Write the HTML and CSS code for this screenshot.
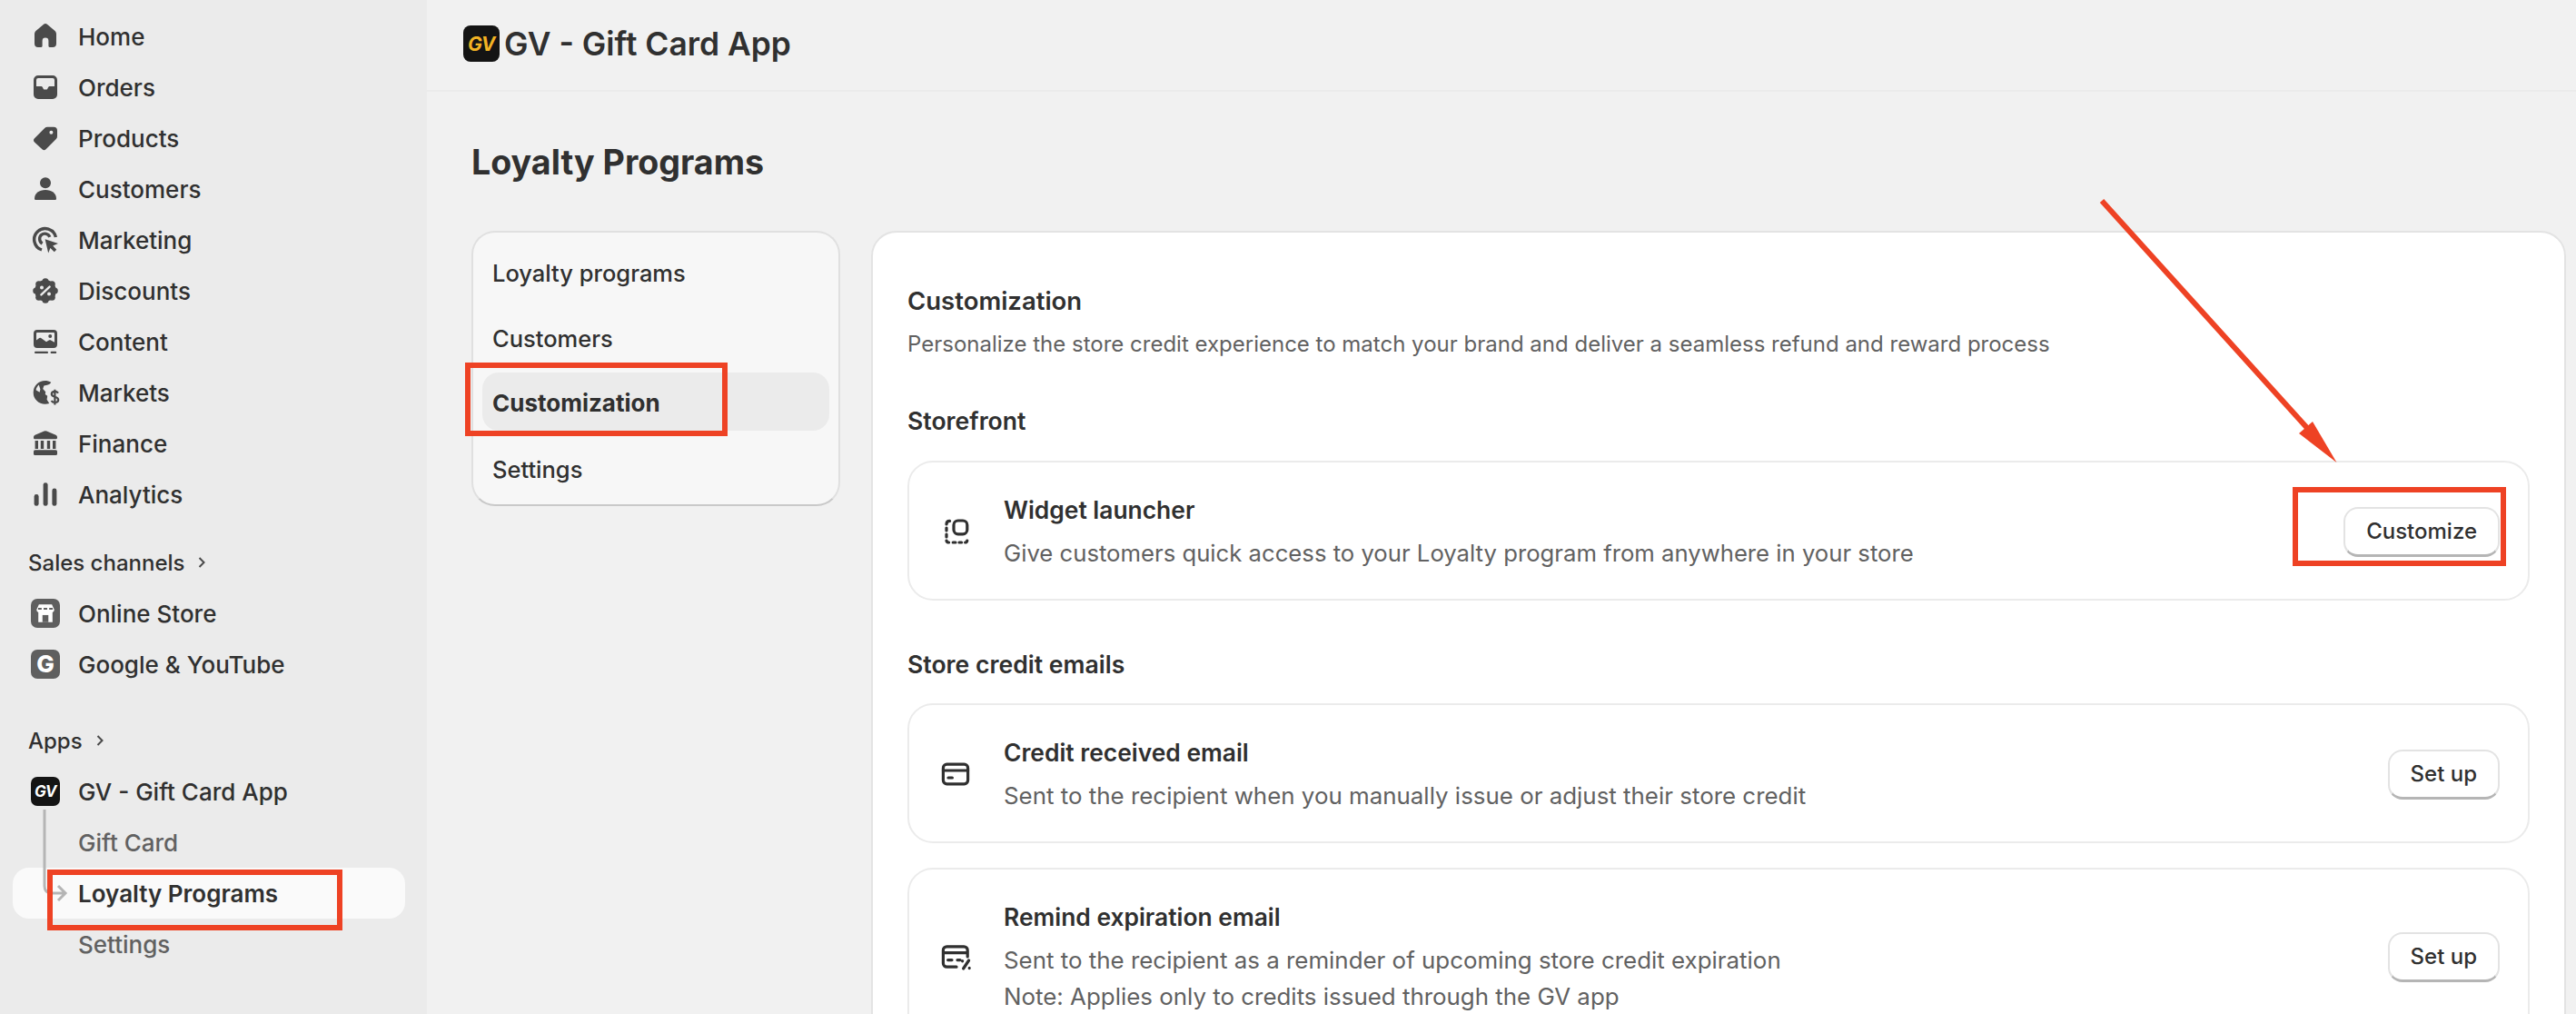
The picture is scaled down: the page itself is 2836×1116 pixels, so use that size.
FILE: index.html
```html
<!DOCTYPE html>
<html lang="en">
<head>
    <meta charset="UTF-8">
    <meta name="viewport" content="width=device-width, initial-scale=1.0">
    <title>GV - Gift Card App - Loyalty Programs</title>
    <link rel="stylesheet" href="styles.css">
</head>
<body>

<div class="app">

    <div class="sidebar">
        <ul class="side-list">
            <li class="side-item">
                <svg class="side-icon" viewBox="0 0 20 20"><path d="M8.900 3.500a1.700 1.700 0 0 1 2.200 0l4 3.400c.6.500.9 1.100.9 1.900V14a2 2 0 0 1-2 2h-1.500a.8.8 0 0 1-.8-.8v-2.700a1.700 1.700 0 0 0-3.400 0v2.700a.8.8 0 0 1-.8.8H6a2 2 0 0 1-2-2V8.800c0-.8.3-1.400.9-1.900z"/></svg>
                Home
            </li>
            <li class="side-item">
                <svg class="side-icon" viewBox="0 0 20 20"><path fill-rule="evenodd" d="M6 3.500h8A2.500 2.500 0 0 1 16.500 6v8a2.500 2.500 0 0 1-2.500 2.500H6A2.500 2.500 0 0 1 3.500 14V6A2.500 2.500 0 0 1 6 3.500zM6 5a1 1 0 0 0-1 1v3.500h2.500c.5 0 .8.2 1 .6l.3.6c.2.4.5.6 1 .6h.4c.5 0 .8-.2 1-.6l.3-.6c.2-.4.5-.6 1-.6H15V6a1 1 0 0 0-1-1z"/></svg>
                Orders
            </li>
            <li class="side-item">
                <svg class="side-icon" viewBox="0 0 20 20"><path fill-rule="evenodd" d="M16.500 5.500V9c0 .6-.2 1.100-.6 1.500l-5.600 5.600a1.500 1.500 0 0 1-2.100 0L4 12.200a1.500 1.500 0 0 1 0-2.100l5.600-5.600c.4-.4.9-.6 1.500-.6h3.400a2 2 0 0 1 2 2zM13.200 7.900a1 1 0 1 0 0-2 1 1 0 0 0 0 2z"/></svg>
                Products
            </li>
            <li class="side-item">
                <svg class="side-icon" viewBox="0 0 20 20"><circle cx="10" cy="6.600" r="3"/><path d="M4 15.200c0-2.800 2.600-4.700 6-4.700s6 1.900 6 4.700c0 .5-.3.8-.8.8H4.800c-.5 0-.8-.3-.8-.8z"/></svg>
                Customers
            </li>
            <li class="side-item">
                <svg class="side-icon" viewBox="0 0 20 20"><path class="line" d="M8 15.500A6 6 0 1 1 15.700 8.500"/><path class="line" d="M8.300 12A2.900 2.900 0 1 1 12.400 8.400"/><path d="M9.800 9.600l7.200 2.400-2.900 1.200 2 2.200-1.200 1.200-2.200-2.100-1.100 2.800z"/></svg>
                Marketing
            </li>
            <li class="side-item">
                <svg class="side-icon" viewBox="0 0 20 20">
                    <circle cx="10" cy="10" r="5.900"/>
                    <circle cx="10" cy="4.900" r="1.800"/><circle cx="10" cy="15.100" r="1.800"/>
                    <circle cx="4.900" cy="10" r="1.800"/><circle cx="15.100" cy="10" r="1.800"/>
                    <circle cx="6.400" cy="6.400" r="1.800"/><circle cx="13.600" cy="6.400" r="1.800"/>
                    <circle cx="6.400" cy="13.600" r="1.800"/><circle cx="13.600" cy="13.600" r="1.800"/>
                    <path class="cut" d="M12.300 7.800l-4.600 4.400"/><circle class="hole" cx="8" cy="8.200" r="1"/><circle class="hole" cx="12" cy="11.800" r="1"/>
                </svg>
                Discounts
            </li>
            <li class="side-item">
                <svg class="side-icon" viewBox="0 0 20 20"><path fill-rule="evenodd" d="M5.500 3.500h9a2 2 0 0 1 2 2v6a2 2 0 0 1-2 2h-9a2 2 0 0 1-2-2v-6a2 2 0 0 1 2-2zM5.500 5a.5.5 0 0 0-.5.5v3.700l1.300-1c.5-.4 1.100-.4 1.600 0l2.600 1.900 1.200-.7c.5-.3 1-.3 1.500 0l1.800 1V5.500a.5.5 0 0 0-.5-.5z"/><circle cx="12.600" cy="7" r="1"/><rect x="4" y="15.400" width="7.500" height="1.100" rx=".5"/><rect x="12.800" y="15.400" width="3.300" height="1.100" rx=".5"/></svg>
                Content
            </li>
            <li class="side-item">
                <svg class="side-icon" viewBox="0 0 20 20"><path fill-rule="evenodd" d="M9.800 3.500c1.200 0 2.300.3 3.300.9-.5.900-1.100 1.300-2.100 1.500L9.200 6.200 8.600 8l1.500 1.600-.2 1.400 1.200.9-.3 2 1.300 2.100c-.7.300-1.500.4-2.300.4a6.400 6.400 0 0 1 0-12.900zM6.400 5.800C5.500 6.600 5 7.600 4.800 8.600l2 1.300.4-1.600z"/><path class="line thin" d="M17 10.300c-.4-.6-1-.9-1.800-.9-1 0-1.800.6-1.800 1.500 0 2 3.700 1 3.700 3.100 0 .9-.8 1.500-1.900 1.500-.8 0-1.500-.3-1.900-1M15.200 8.400v8.300"/></svg>
                Markets
            </li>
            <li class="side-item">
                <svg class="side-icon" viewBox="0 0 20 20"><path d="M9.300 3.300a1.800 1.800 0 0 1 1.400 0l5 2.100c.5.200.8.700.8 1.200v.4c0 .3-.3.600-.6.600H4.100a.6.600 0 0 1-.6-.6v-.4c0-.5.300-1 .8-1.200z"/><rect x="4.300" y="8.500" width="1.700" height="4.500"/><rect x="7.400" y="8.500" width="1.700" height="4.500"/><rect x="10.900" y="8.500" width="1.700" height="4.500"/><rect x="14" y="8.500" width="1.700" height="4.500"/><rect x="3.500" y="13.600" width="13" height="2.900" rx=".8"/></svg>
                Finance
            </li>
            <li class="side-item">
                <svg class="side-icon" viewBox="0 0 20 20"><rect x="3.800" y="10" width="2.500" height="6.400" rx="1.200"/><rect x="8.800" y="3.600" width="2.500" height="12.800" rx="1.200"/><rect x="13.700" y="6.800" width="2.500" height="9.600" rx="1.200"/></svg>
                Analytics
            </li>
        </ul>

        <div class="side-heading">
            Sales channels
            <svg class="chevron" viewBox="0 0 10 14"><path d="M2.500 2l5 5-5 5"/></svg>
        </div>
        <ul class="side-list">
            <li class="side-item">
                <span class="channel-box">
                    <svg class="store-glyph" viewBox="0 0 20 20"><path d="M4.500 2.500h11l2 4.500a2.300 2.300 0 0 1-1.500 2.300V17.500H4V9.300A2.300 2.300 0 0 1 2.500 7z"/><path class="cut-grey" d="M3.800 6.200h3M8.500 6.200h3M13.200 6.200h3"/><rect class="door" x="7.500" y="11.500" width="5" height="6"/></svg>
                </span>
                Online Store
            </li>
            <li class="side-item">
                <span class="channel-box channel-google">G</span>
                Google &amp; YouTube
            </li>
        </ul>

        <div class="side-heading side-heading-apps">
            Apps
            <svg class="chevron" viewBox="0 0 10 14"><path d="M2.500 2l5 5-5 5"/></svg>
        </div>
        <ul class="side-list">
            <li class="side-item">
                <span class="channel-box channel-gv">GV</span>
                GV - Gift Card App
            </li>
            <li class="side-item side-sub">Gift Card</li>
            <li class="side-item side-sub side-active">
                <svg class="tree-line" viewBox="0 0 40 104"><path d="M5 2v84q0 8 8 8h15M20 86l8 8-8 8"/></svg>
                Loyalty Programs
            </li>
            <li class="side-item side-sub">Settings</li>
        </ul>
    </div>

    <div class="main">
        <div class="topbar">
            <span class="app-logo">GV</span>
            <span class="app-name">GV - Gift Card App</span>
            <span class="more-dots"></span>
        </div>

        <div class="page">
            <h1 class="page-title">Loyalty Programs</h1>

            <div class="columns">
                <ul class="tabs">
                    <li class="tab">Loyalty programs</li>
                    <li class="tab">Customers</li>
                    <li class="tab tab-active">Customization</li>
                    <li class="tab">Settings</li>
                </ul>

                <div class="panel">
                    <h2 class="panel-title">Customization</h2>
                    <p class="panel-sub">Personalize the store credit experience to match your brand and deliver a seamless refund and reward process</p>

                    <h3 class="group-title">Storefront</h3>
                    <div class="row">
                        <svg class="row-icon" viewBox="0 0 20 20"><path d="M6.800 4.200c-1.100 0-1.800.7-1.800 1.800M5 8v1.500M5 11.500V13M5 15c.1.700.6 1 1.300 1M8.600 16h1.400M12 16h1.300M15.300 16c.7 0 1-.4 1.100-1"/><rect x="9" y="4" width="7.400" height="7.400" rx="2.400"/></svg>
                        <div class="row-text">
                            <div class="row-title">Widget launcher</div>
                            <div class="row-desc row-desc-tight">Give customers quick access to your Loyalty program from anywhere in your store</div>
                        </div>
                        <button class="btn">Customize</button>
                    </div>

                    <h3 class="group-title group-title-next">Store credit emails</h3>
                    <div class="row">
                        <svg class="row-icon" viewBox="0 0 20 20"><rect x="3.200" y="4.600" width="13.600" height="10.800" rx="2"/><path d="M3.200 8h13.600M6 12h2.200"/></svg>
                        <div class="row-text">
                            <div class="row-title">Credit received email</div>
                            <div class="row-desc">Sent to the recipient when you manually issue or adjust their store credit</div>
                        </div>
                        <button class="btn">Set up</button>
                    </div>
                    <div class="row row-next">
                        <svg class="row-icon" viewBox="0 0 20 20"><path d="M16.600 10V6.400a2 2 0 0 0-2-2H5.200a2 2 0 0 0-2 2v7.200a2 2 0 0 0 2 2h5.300M3.200 7.800h13.400M5.800 11.800H8M11 11.800h1.500M17.300 12l-3 4.500M13.800 12.300v.1M17.600 16.200v.1"/></svg>
                        <div class="row-text">
                            <div class="row-title">Remind expiration email</div>
                            <div class="row-desc">Sent to the recipient as a reminder of upcoming store credit expiration</div>
                            <div class="row-desc">Note: Applies only to credits issued through the GV app</div>
                        </div>
                        <button class="btn">Set up</button>
                    </div>
                </div>
            </div>
        </div>
    </div>

</div>

<!-- red callouts drawn on top of the screenshot -->
<svg class="marks" viewBox="0 0 2836 1116">
    <rect x="55" y="960" width="319" height="61"/>
    <rect x="515" y="402" width="283" height="75"/>
    <rect x="2527" y="539" width="229" height="81"/>
    <path d="M2314 221L2540 471"/>
    <path class="mark-head" d="M2546 464L2531 477L2572.500 509z"/>
</svg>

</body>
</html>
```

FILE: styles.css
```css
* {
    box-sizing: border-box;
    margin: 0;
    padding: 0;
}

body {
    font-family: 'Inter', 'Liberation Sans', sans-serif;
    background-color: #f1f1f1;
    color: #303030;
    overflow: hidden;
}

ul {
    list-style-type: none;
}

.app {
    display: flex;
    height: 100vh;
    overflow: hidden;
}

/* sidebar */

.sidebar {
    flex: 0 0 470px;
    background-color: #ebebeb;
    padding: 12px 24px 0 14px;
}

.side-item {
    display: flex;
    align-items: center;
    gap: 16px;
    height: 56px;
    padding-left: 16px;
    border-radius: 18px;
    font-size: 26px;
    font-weight: 500;
    position: relative;
}

.side-icon {
    width: 40px;
    height: 40px;
    fill: #4a4a4a;
}

.side-icon .line {
    fill: none;
    stroke: #4a4a4a;
    stroke-width: 1.7;
}

.side-icon .thin {
    stroke-width: 1.1;
}

.side-icon .cut {
    fill: none;
    stroke: #ebebeb;
    stroke-width: 1.2;
    stroke-linecap: round;
}

.side-icon .hole {
    fill: #ebebeb;
}

.side-heading {
    display: flex;
    align-items: center;
    gap: 14px;
    height: 56px;
    margin-top: 19px;
    padding-left: 17px;
    font-size: 24px;
    font-weight: 500;
}

.side-heading-apps {
    margin-top: 28px;
}

.chevron {
    width: 10px;
    height: 14px;
    fill: none;
    stroke: #4a4a4a;
    stroke-width: 2;
}

.channel-box {
    display: flex;
    align-items: center;
    justify-content: center;
    flex: 0 0 32px;
    width: 32px;
    height: 32px;
    margin: 0 4px;
    border-radius: 7px;
    background-color: #5f5f5f;
    color: #fff;
}

.store-glyph {
    width: 26px;
    height: 26px;
    fill: #fff;
}

.store-glyph .cut-grey {
    fill: none;
    stroke: #5f5f5f;
    stroke-width: 1.6;
}

.store-glyph .door {
    fill: #5f5f5f;
}

.channel-google {
    font-size: 26px;
    font-weight: 800;
    line-height: 32px;
}

.channel-gv {
    background-color: #141414;
    font-size: 17px;
    font-style: italic;
    font-weight: 700;
    letter-spacing: -.5px;
}

.side-sub {
    padding-left: 72px;
    color: #616161;
}

.side-active {
    background-color: #fafafa;
    color: #303030;
    font-weight: 600;
}

.tree-line {
    position: absolute;
    left: 30px;
    top: -66px;
    width: 40px;
    height: 104px;
    fill: none;
    stroke: #b5b5b5;
    stroke-width: 3;
    overflow: visible;
}

/* top bar */

.main {
    flex: 1;
    min-width: 0;
}

.topbar {
    display: flex;
    align-items: center;
    gap: 5px;
    height: 101px;
    padding-left: 40px;
    padding-bottom: 3px;
    border-bottom: 2px solid #ebebeb;
    position: relative;
}

.app-logo {
    display: flex;
    align-items: center;
    justify-content: center;
    width: 40px;
    height: 40px;
    border-radius: 8px;
    background-color: #141414;
    color: #f3b324;
    font-size: 21px;
    font-style: italic;
    font-weight: 700;
    letter-spacing: -.5px;
}

.app-name {
    font-size: 35.400px;
    font-weight: 600;
}

.more-dots {
    position: absolute;
    right: -12px;
    top: 45px;
    width: 6px;
    height: 6px;
    border-radius: 50%;
    background-color: #4a4a4a;
    box-shadow: 9px 0 0 #4a4a4a;
}

/* page */

.page {
    padding: 54px 11px 0 49px;
}

.page-title {
    height: 48px;
    margin-bottom: 51px;
    font-size: 37.600px;
    line-height: 48px;
    font-weight: 700;
}

.columns {
    display: flex;
    align-items: flex-start;
    gap: 34px;
}

.tabs {
    flex: 0 0 406px;
    height: 303px;
    padding: 10px;
    background-color: #f7f7f7;
    border: 2px solid #e0e0e0;
    border-bottom-color: #c9c9c9;
    border-radius: 26px;
}

.tab {
    height: 64px;
    margin-bottom: 8px;
    padding-left: 11px;
    border-radius: 18px;
    font-size: 25.500px;
    line-height: 69px;
    font-weight: 450;
}

.tab-active {
    background-color: #ebebeb;
    font-size: 26px;
    line-height: 68px;
    font-weight: 700;
}

.panel {
    flex: 1;
    min-width: 0;
    padding: 55px 38px 0;
    background-color: #fff;
    border: 2px solid #e3e3e3;
    border-radius: 28px;
}

.panel-title {
    font-size: 27.500px;
    line-height: 40px;
    font-weight: 600;
}

.panel-sub {
    margin-top: 8px;
    font-size: 24px;
    line-height: 40px;
    color: #616161;
}

.group-title {
    margin-top: 44px;
    margin-bottom: 24px;
    font-size: 26.600px;
    line-height: 40px;
    font-weight: 600;
}

.group-title-next {
    margin-top: 50px;
    margin-bottom: 23px;
}

.row {
    display: flex;
    align-items: center;
    gap: 33px;
    padding: 32px 31px 30px 31px;
    border: 2px solid #ebebeb;
    border-radius: 28px;
}

.row-next {
    margin-top: 27px;
}

.row-icon {
    flex: 0 0 40px;
    width: 40px;
    height: 40px;
    fill: none;
    stroke: #303030;
    stroke-width: 1.600;
    stroke-linecap: round;
}

.row-text {
    flex: 1;
    min-width: 0;
}

.row-title {
    margin-bottom: 8px;
    font-size: 26.400px;
    line-height: 40px;
    font-weight: 600;
}

.row-desc {
    font-size: 25.900px;
    line-height: 40px;
    color: #616161;
}

.row-desc-tight {
    font-size: 25.700px;
}

.btn {
    flex: none;
    height: 55px;
    padding: 0 23px;
    background-color: #fff;
    border: 2px solid #e3e3e3;
    border-bottom: 3px solid #b5b5b5;
    border-radius: 16px;
    font-family: inherit;
    font-size: 24px;
    font-weight: 500;
    color: #303030;
}

/* callouts */

.marks {
    position: absolute;
    left: 0;
    top: 0;
    width: 2836px;
    height: 1116px;
    fill: none;
    stroke: #ee4224;
    stroke-width: 6;
    pointer-events: none;
}

.marks .mark-head {
    fill: #ee4224;
    stroke: none;
}
```
